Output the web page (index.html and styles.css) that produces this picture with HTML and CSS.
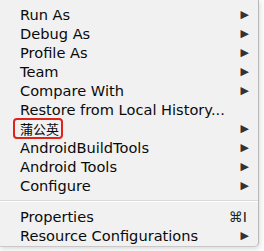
FILE: index.html
```html
<!DOCTYPE html>
<html lang="en">
  <head>
    <meta charset="UTF-8" />
    <title>Context Menu</title>
    <link rel="stylesheet" href="styles.css">
  </head>
  <body>
    <ul class="menu">
      <li class="item"><span class="label">Run As</span><span class="arrow">&#9654;</span></li>
      <li class="item"><span class="label">Debug As</span><span class="arrow">&#9654;</span></li>
      <li class="item"><span class="label">Profile As</span><span class="arrow">&#9654;</span></li>
      <li class="item"><span class="label">Team</span><span class="arrow">&#9654;</span></li>
      <li class="item"><span class="label">Compare With</span><span class="arrow">&#9654;</span></li>
      <li class="item"><span class="label">Restore from Local History...</span></li>
      <li class="item"><span class="label marked">蒲公英</span><span class="arrow">&#9654;</span></li>
      <li class="item"><span class="label">AndroidBuildTools</span><span class="arrow">&#9654;</span></li>
      <li class="item"><span class="label">Android Tools</span><span class="arrow">&#9654;</span></li>
      <li class="item"><span class="label">Configure</span><span class="arrow">&#9654;</span></li>
      <li class="separator"></li>
      <li class="item"><span class="label">Properties</span><span class="shortcut">&#8984;I</span></li>
      <li class="item"><span class="label">Resource Configurations</span><span class="arrow">&#9654;</span></li>
    </ul>
  </body>
</html>
```

FILE: styles.css
```css
* {
  box-sizing: border-box;
  margin: 0;
  padding: 0;
}

body {
  background: #fbfbfb;
  font-family: "DejaVu Sans", "Noto Sans CJK SC", sans-serif;
  width: 264px;
  height: 251px;
  overflow: hidden;
}

.menu {
  list-style: none;
  width: 259px;
  height: 247px;
  background: #f1f1f1;
  border-right: 1px solid #b8b8b8;
  border-bottom: 1px solid #c8c8c8;
  border-bottom-right-radius: 5px;
  padding: 5px 0 2px;
  box-shadow: 1px 2px 4px rgba(0, 0, 0, 0.12);
}

.item {
  display: flex;
  align-items: center;
  justify-content: space-between;
  height: 19px;
  padding: 0 9px 0 20px;
  font-size: 14.6px;
  color: #0a0a0a;
  white-space: nowrap;
}

.marked {
  position: relative;
  font-family: "Noto Sans CJK SC", sans-serif;
  font-size: 13px;
}

.marked::before {
  content: "";
  position: absolute;
  left: -7px;
  top: -1px;
  right: -4px;
  bottom: -1px;
  border: 2px solid #e0241b;
  border-radius: 4px;
}

.arrow {
  font-size: 11px;
  color: #333;
}

.shortcut {
  font-size: 14px;
  color: #222;
  margin-right: 2px;
}

.separator {
  margin: 5px 0 5px;
  background: #d9d9d9;
  border-bottom: 1px solid #fff;
  height: 2px;
}
```
